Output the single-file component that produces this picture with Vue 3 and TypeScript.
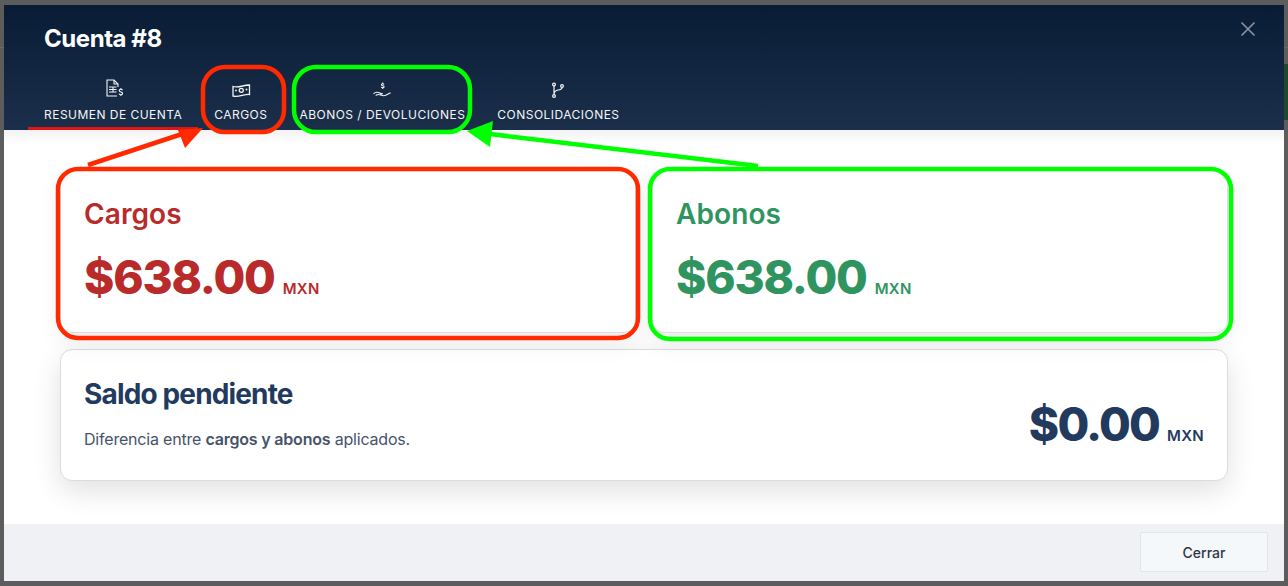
<template>
  <div class="backdrop">
    <span class="bg-line"></span>
    <span class="bg-green"></span>

    <div class="modal">
      <header class="modal-header">
        <h2 class="modal-title">Cuenta #{{ accountId }}</h2>
        <button class="close-btn" aria-label="Cerrar">
          <svg width="16" height="16" viewBox="0 0 16 16" fill="none" stroke="currentColor" stroke-width="1.6">
            <path d="M1.500 1.500l13 13M14.500 1.500l-13 13" />
          </svg>
        </button>
        <nav class="tabs">
          <div class="tab active">
            <svg class="tab-icon" viewBox="0 0 20 20" fill="none" stroke="currentColor" stroke-width="1.100">
              <path d="M14 17H4V1h7l4 4v3" />
              <path d="M11 1v4h4" />
              <path d="M6 8h7.500M6 10.500h7.500M6 13h7.500M10 8v5" />
              <path d="M19.500 11.300c-.3-.7-.9-1-1.700-1-1 0-1.600.5-1.600 1.300 0 1.800 3.400 1 3.400 2.800 0 .8-.7 1.300-1.700 1.300-.9 0-1.500-.4-1.800-1M17.900 9v1.300M17.900 15.700V17" />
            </svg>
            <span>RESUMEN DE CUENTA</span>
          </div>
          <div class="tab">
            <svg class="tab-icon" viewBox="0 0 20 20" fill="none" stroke="currentColor" stroke-width="1.300">
              <path d="M2 7.500c5.500 1.800 11-1.800 16.500-1.500v9.500c-5.500-.5-11 3-16.500 1.500z" />
              <circle cx="10.300" cy="11.300" r="2" />
              <path d="M5 11.500v.01M15.500 10.500v.01" stroke-linecap="round" stroke-width="1.800" />
            </svg>
            <span>CARGOS</span>
          </div>
          <div class="tab">
            <svg class="tab-icon" viewBox="0 0 20 20" fill="none" stroke="currentColor" stroke-width="1.100">
              <path d="M12 5.500c-.2-.5-.7-.8-1.300-.8-.8 0-1.300.4-1.300 1 0 1.400 2.700.7 2.700 2.100 0 .6-.5 1-1.400 1-.7 0-1.200-.3-1.400-.8M10.700 3.500v1.200M10.700 8.800V10" />
              <path d="M1.500 14.800c1.500-1.500 3.500-1.700 5-1.200 1.500.5 2.500 1.200 4 1.200l-2.200.4M18.500 13.800l-4.800 2.500c-2 .9-3.500.3-5-.3-2-.8-3.500-.7-5 .5" stroke-linejoin="round" />
            </svg>
            <span>ABONOS / DEVOLUCIONES</span>
          </div>
          <div class="tab">
            <svg class="tab-icon" viewBox="0 0 20 20" fill="none" stroke="currentColor" stroke-width="1.200">
              <circle cx="6" cy="5.500" r="1.400" />
              <circle cx="6" cy="17" r="1.400" />
              <circle cx="14" cy="7" r="1.400" />
              <path d="M6 6.900v8.700M6 15c.3-2 1.500-3.600 4-4 2.200-.3 4-1 4-2.600" />
            </svg>
            <span>CONSOLIDACIONES</span>
          </div>
        </nav>
      </header>

      <main class="modal-body">
        <div class="totals">
          <section v-for="card in totals" :key="card.title" class="card total-card" :class="card.tone">
            <h3 class="card-title">{{ card.title }}</h3>
            <p class="amount">{{ card.amount }}<small>MXN</small></p>
          </section>
        </div>

        <section class="card balance-card">
          <div class="balance-text">
            <h3 class="balance-title">Saldo pendiente</h3>
            <p class="balance-desc">Diferencia entre <strong>cargos y abonos</strong> aplicados.</p>
          </div>
          <p class="amount balance-amount">$0.00<small>MXN</small></p>
        </section>
      </main>

      <footer class="modal-footer">
        <button class="btn-close">Cerrar</button>
      </footer>
    </div>

    <!-- anotaciones encima de la captura -->
    <svg class="marks" width="1288" height="586" viewBox="0 0 1288 586" fill="none" stroke-width="4.500">
      <g stroke="#ff2a00">
        <rect x="203" y="67" width="81" height="65" rx="22" />
        <rect x="58" y="169" width="580" height="169" rx="20" />
        <path d="M88 165L182 134" />
      </g>
      <path d="M203 128L178 130L185 148z" fill="#ff2a00" />
      <g stroke="#00ff00">
        <rect x="294" y="67" width="176" height="65" rx="22" />
        <rect x="650" y="169" width="581" height="170" rx="20" />
        <path d="M758 166L490 134" />
      </g>
      <path d="M467 131L493 121L490 147z" fill="#00ff00" />
    </svg>
  </div>
</template>

<script setup lang="ts">
interface TotalCard {
  title: string
  amount: string
  tone: string
}

const accountId = 8

const totals: TotalCard[] = [
  { title: 'Cargos', amount: '$638.00', tone: 'tone-red' },
  { title: 'Abonos', amount: '$638.00', tone: 'tone-green' },
]
</script>

<style>
html,
body {
  margin: 0;
  overflow: hidden;
}
</style>

<style scoped>
.backdrop {
  position: relative;
  width: 1288px;
  height: 586px;
  padding: 5px 4px;
  box-sizing: border-box;
  background: #5c5c5c;
  font-family: Inter, 'Liberation Sans', sans-serif;
}

.bg-line {
  position: absolute;
  top: 47px;
  left: 0;
  width: 100%;
  height: 1px;
  background: #6a6a6a;
}

.bg-green {
  position: absolute;
  top: 64px;
  right: 0;
  width: 4px;
  height: 56px;
  background: #1b4a2c;
}

.modal {
  position: relative;
  display: flex;
  flex-direction: column;
  height: 576px;
  background: #fff;
}

.modal-header {
  position: relative;
  height: 125px;
  box-sizing: border-box;
  padding: 20px 24px 0;
  background: linear-gradient(180deg, #081c36 0%, #1c2f4a 100%);
  color: #fff;
  z-index: 1;
}

.modal-title {
  margin: 0 0 0 16px;
  font-size: 24px;
  line-height: 28px;
  font-weight: 700;
  letter-spacing: -0.45px;
}

.close-btn {
  position: absolute;
  top: 16px;
  right: 28px;
  display: flex;
  padding: 0;
  border: none;
  background: none;
  color: #8b94a4;
}

.tabs {
  display: flex;
  margin-top: 7px;
}

.tab {
  display: flex;
  flex-direction: column;
  align-items: center;
  height: 70px;
  box-sizing: border-box;
  padding: 19px 16px 0;
  font-size: 12px;
  line-height: 16px;
  letter-spacing: 0.47px;
  font-weight: 400;
  color: #f4f5f7;
  white-space: nowrap;
}

.tab.active {
  border-bottom: 3px solid #e01414;
}

.tab-icon {
  width: 20px;
  height: 20px;
  margin-bottom: 8px;
}

.modal-body {
  flex: 1;
  box-sizing: border-box;
  padding: 40px 56px 0;
  background: linear-gradient(180deg, #f2f2f2 0, #fff 14px);
}

.totals {
  display: grid;
  grid-template-columns: 1fr 1fr;
  gap: 16px;
  margin-bottom: 16px;
}

.card {
  box-sizing: border-box;
  background: #fff;
  border: 1px solid #dcdcdc;
  border-radius: 12px;
  box-shadow: 0 10px 24px rgba(0, 0, 0, 0.08);
}

.total-card {
  height: 163px;
  padding: 25px 23px 0;
}

.card-title {
  margin: 0;
  font-size: 28px;
  line-height: 36px;
  font-weight: 600;
  letter-spacing: 0.1px;
}

.amount {
  margin: 16px 0 0;
  font-size: 46px;
  line-height: 58px;
  font-weight: 800;
  letter-spacing: -1.2px;
}

.amount small {
  margin-left: 8px;
  font-size: 15px;
  font-weight: 600;
  letter-spacing: 0.3px;
}

.tone-red {
  color: #b92a2a;
}

.tone-green {
  color: #2f9460;
}

.balance-card {
  display: flex;
  align-items: center;
  justify-content: space-between;
  height: 132px;
  padding: 0 23px;
  color: #223a5e;
  box-shadow: 0 10px 28px rgba(0, 0, 0, 0.12);
}

.balance-text {
  padding-bottom: 4px;
}

.balance-title {
  margin: 0;
  font-size: 28px;
  line-height: 36px;
  font-weight: 700;
  letter-spacing: -0.85px;
}

.balance-desc {
  margin: 16px 0 0;
  font-size: 16px;
  line-height: 22px;
  letter-spacing: -0.2px;
  color: #46536a;
}

.balance-desc strong {
  font-weight: 600;
}

.balance-amount {
  margin: 30px 0 0;
  letter-spacing: -1.8px;
}

.modal-footer {
  display: flex;
  justify-content: flex-end;
  height: 57px;
  box-sizing: border-box;
  padding: 8px 16px 0;
  background: #eff1f5;
}

.btn-close {
  width: 128px;
  height: 40px;
  border: 1px solid #e2e6ec;
  border-radius: 2px;
  background: #f5f8fb;
  color: #2d3648;
  font-family: inherit;
  font-size: 14px;
  font-weight: 500;
}

.marks {
  position: absolute;
  top: 0;
  left: 0;
  pointer-events: none;
  z-index: 2;
}
</style>
